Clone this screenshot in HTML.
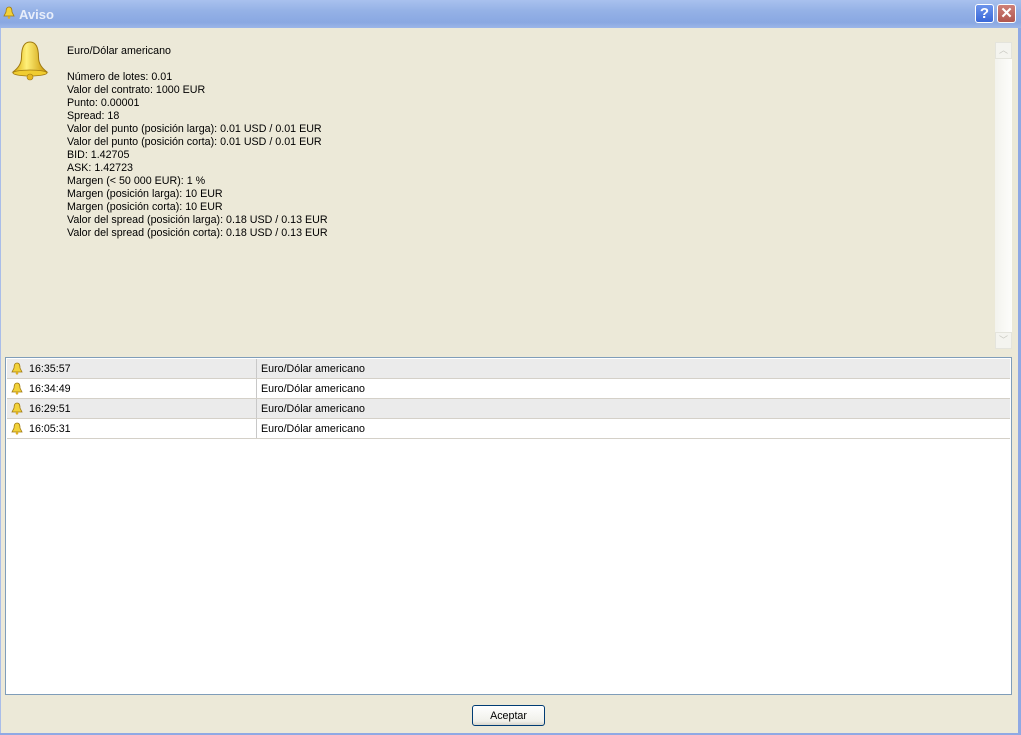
<!DOCTYPE html>
<html><head><meta charset="utf-8"><style>
*{margin:0;padding:0;box-sizing:border-box}
body{width:1021px;height:735px;overflow:hidden;background:#ECE9D8;font-family:"Liberation Sans",Tahoma,sans-serif;font-size:10.7px;color:#000;position:relative}
.title{position:absolute;left:0;top:0;width:1021px;height:28px;background:linear-gradient(#a9c1ee,#94b1e6 40%,#8aa8e2 80%,#9cb6e8);}
.title .t{position:absolute;left:19px;top:7px;font-weight:bold;font-size:13px;color:#e8eefa}
.bR{position:absolute;right:0;top:28px;width:3px;height:707px;background:#8fa9e4}
.bL{position:absolute;left:0;top:28px;width:1px;height:707px;background:#a9bde9}
.bB{position:absolute;left:0;bottom:0;width:1021px;height:2px;background:#8fa9e4}
.btn{position:absolute;top:4px;width:19px;height:19px;border:1px solid #fff;border-radius:3px;color:#fff;font-weight:bold;font-size:15px;text-align:center;line-height:17px}
.info{position:absolute;left:67px;top:45px;line-height:13px}
.sb{position:absolute;left:995px;top:42px;width:17px;height:307px;background:linear-gradient(90deg,#f3f3ee,#fdfdfb)}
.sbb{position:absolute;left:0;width:17px;height:17px;border:1px solid #e4e4dc;background:#f4f4ef;color:#c8c8c0;font-size:9px;text-align:center;line-height:15px}
.list{position:absolute;left:5px;top:357px;width:1007px;height:338px;border:1px solid #7f9db9;background:#fff}
.row{position:absolute;left:1px;width:1003px;height:20px;border-bottom:1px solid #d4d0c8;line-height:21px}
.row.g{background:#ebebeb}
.row .c1{position:absolute;left:22px}
.row .c2{position:absolute;left:249px;top:0;height:19px;border-left:1px solid #c8c8c8;padding-left:4px}
.row svg{position:absolute;left:4px;top:3px}
.ok{position:absolute;left:472px;top:705px;width:73px;height:21px;border:1px solid #003c74;border-radius:3px;background:linear-gradient(#fff,#f0f0ea 80%,#d8d6cc);text-align:center;line-height:20px}
</style></head><body>
<div class="title">
<svg style="position:absolute;left:3px;top:6px" width="12" height="14" viewBox="0 0 12 14"><path d="M6 1C3.5 1 3 3 3 6L1 10H11L9 6C9 3 8.5 1 6 1Z" fill="#f2d23a" stroke="#a07a10" stroke-width=".8"/><circle cx="6" cy="11.5" r="1.3" fill="#e0b020"/></svg>
<div class="t">Aviso</div>
<div class="btn" style="left:975px;background:linear-gradient(#6c94ec,#3a68d8)">?</div>
<div class="btn" style="left:997px;background:linear-gradient(#cf8078,#b0564e)">✕</div>
</div>
<div class="bL"></div><div class="bR"></div><div class="bB"></div>
<svg style="position:absolute;left:9px;top:39px" width="42" height="42" viewBox="0 0 42 42"><defs><linearGradient id="g" x1="0" x2="1"><stop offset="0" stop-color="#d8a800"/><stop offset=".4" stop-color="#fff07a"/><stop offset="1" stop-color="#c89400"/></linearGradient></defs><path d="M21 3C14 3 12.5 10 12.5 18C12.5 25 9 29 4 33H38C33 29 29.5 25 29.5 18C29.5 10 28 3 21 3Z" fill="url(#g)" stroke="#a07a10" stroke-width="1"/><ellipse cx="21" cy="34" rx="17" ry="3" fill="#f0cc30" stroke="#a07a10" stroke-width=".8"/><circle cx="21" cy="38" r="3" fill="#e8b820" stroke="#a07a10" stroke-width=".6"/></svg>
<div class="info">Euro/Dólar americano<br><br>Número de lotes: 0.01<br>Valor del contrato: 1000 EUR<br>Punto: 0.00001<br>Spread: 18<br>Valor del punto (posición larga): 0.01 USD / 0.01 EUR<br>Valor del punto (posición corta): 0.01 USD / 0.01 EUR<br>BID: 1.42705<br>ASK: 1.42723<br>Margen (&lt; 50 000 EUR): 1 %<br>Margen (posición larga): 10 EUR<br>Margen (posición corta): 10 EUR<br>Valor del spread (posición larga): 0.18 USD / 0.13 EUR<br>Valor del spread (posición corta): 0.18 USD / 0.13 EUR</div>
<div class="sb"><div class="sbb" style="top:0">︿</div><div class="sbb" style="bottom:0">﹀</div></div>
<div class="list">
<div class="row g" style="top:1px"><svg width="12" height="13" viewBox="0 0 12 13"><path d="M6 1C3.5 1 3 3 3 6L1 10H11L9 6C9 3 8.5 1 6 1Z" fill="#f2d23a" stroke="#a07a10" stroke-width=".8"/><circle cx="6" cy="11.3" r="1.3" fill="#e0b020"/></svg><span class="c1">16:35:57</span><span class="c2">Euro/Dólar americano</span></div>
<div class="row" style="top:21px"><svg width="12" height="13" viewBox="0 0 12 13"><path d="M6 1C3.5 1 3 3 3 6L1 10H11L9 6C9 3 8.5 1 6 1Z" fill="#f2d23a" stroke="#a07a10" stroke-width=".8"/><circle cx="6" cy="11.3" r="1.3" fill="#e0b020"/></svg><span class="c1">16:34:49</span><span class="c2">Euro/Dólar americano</span></div>
<div class="row g" style="top:41px"><svg width="12" height="13" viewBox="0 0 12 13"><path d="M6 1C3.5 1 3 3 3 6L1 10H11L9 6C9 3 8.5 1 6 1Z" fill="#f2d23a" stroke="#a07a10" stroke-width=".8"/><circle cx="6" cy="11.3" r="1.3" fill="#e0b020"/></svg><span class="c1">16:29:51</span><span class="c2">Euro/Dólar americano</span></div>
<div class="row" style="top:61px"><svg width="12" height="13" viewBox="0 0 12 13"><path d="M6 1C3.5 1 3 3 3 6L1 10H11L9 6C9 3 8.5 1 6 1Z" fill="#f2d23a" stroke="#a07a10" stroke-width=".8"/><circle cx="6" cy="11.3" r="1.3" fill="#e0b020"/></svg><span class="c1">16:05:31</span><span class="c2">Euro/Dólar americano</span></div>
</div>
<div class="ok">Aceptar</div>
</body></html>
